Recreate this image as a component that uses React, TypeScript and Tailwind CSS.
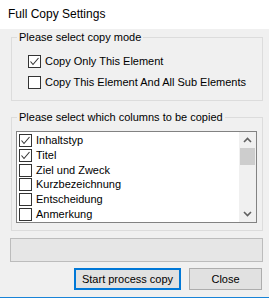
const font = { fontFamily: '"Liberation Sans", Arial, sans-serif' }

function Box({ checked }: { checked?: boolean }) {
    return (
        <span className="flex h-[13px] w-[13px] shrink-0 items-center justify-center border border-[#333333] bg-white">
            {checked && (
                <svg width="11" height="11" viewBox="0 0 11 11">
                    <polyline points="1.5,5.5 4,8.5 9.5,2" fill="none" stroke="#333333" strokeWidth="1.1" />
                </svg>
            )}
        </span>
    )
}

const columns = [
    { name: 'Inhaltstyp', checked: true },
    { name: 'Titel', checked: true },
    { name: 'Ziel und Zweck', checked: false },
    { name: 'Kurzbezeichnung', checked: false },
    { name: 'Entscheidung', checked: false },
    { name: 'Anmerkung', checked: false },
]

export default function App() {
    return (
        <div className="flex h-[298px] w-[269px] flex-col overflow-hidden bg-[#f0f0f0] text-[11px] leading-[13px] text-black" style={font}>
            <div className="flex h-[29px] shrink-0 items-center bg-white pl-[8px] text-[12px] leading-[15px]">
                Full Copy Settings
            </div>

            <div className="flex flex-1 flex-col pl-[10px] pr-[6px] pt-[2px]">
                <fieldset className="ml-[1px] border border-[#dcdcdc]">
                    <legend className="ml-[5px] px-[2px]">Please select copy mode</legend>
                    <div className="flex flex-col gap-[8px] pb-[11px] pl-[16px] pt-[11px]">
                        <div className="flex items-center gap-[4px]">
                            <Box checked />
                            <span>Copy Only This Element</span>
                        </div>
                        <div className="flex items-center gap-[4px]">
                            <Box />
                            <span>Copy This Element And All Sub Elements</span>
                        </div>
                    </div>
                </fieldset>

                <fieldset className="ml-[1px] mt-[10px] border border-[#dcdcdc]">
                    <legend className="ml-[5px] px-[2px]">Please select which columns to be copied</legend>
                    <div className="pb-[7px] pl-[4px] pr-[5px] pt-[7px]">
                        <div className="flex h-[92px] border border-[#828282] bg-white">
                            <div className="flex flex-1 flex-col pl-[2px] pt-[1px]">
                                {columns.map(c => (
                                    <div key={c.name} className="flex h-[15px] items-center gap-[4px]">
                                        <Box checked={c.checked} />
                                        <span>{c.name}</span>
                                    </div>
                                ))}
                            </div>
                            <div className="flex w-[17px] flex-col bg-[#f0f0f0]">
                                <div className="flex h-[16px] items-center justify-center">
                                    <svg width="9" height="6" viewBox="0 0 9 6">
                                        <polyline points="1,5 4.5,1.5 8,5" fill="none" stroke="#606060" strokeWidth="1.6" />
                                    </svg>
                                </div>
                                <div className="mx-[1px] h-[17px] bg-[#cdcdcd]" />
                                <div className="flex-1" />
                                <div className="flex h-[16px] items-center justify-center">
                                    <svg width="9" height="6" viewBox="0 0 9 6">
                                        <polyline points="1,1 4.5,4.5 8,1" fill="none" stroke="#606060" strokeWidth="1.6" />
                                    </svg>
                                </div>
                            </div>
                        </div>
                    </div>
                </fieldset>

                <div className="mt-[7px] h-[24px] border border-[#bcbcbc] bg-[#e6e6e6]" />

                <div className="mt-[6px] flex justify-end gap-[8px] pr-[1px]">
                    <button className="flex h-[22px] w-[107px] items-center justify-center border-2 border-[#0078d7] bg-[#e1e1e1]">
                        Start process copy
                    </button>
                    <button className="flex h-[22px] w-[73px] items-center justify-center border border-[#adadad] bg-[#e1e1e1]">
                        Close
                    </button>
                </div>
            </div>
            <div className="h-[1px] shrink-0 bg-[#1883d7]" />
        </div>
    )
}
